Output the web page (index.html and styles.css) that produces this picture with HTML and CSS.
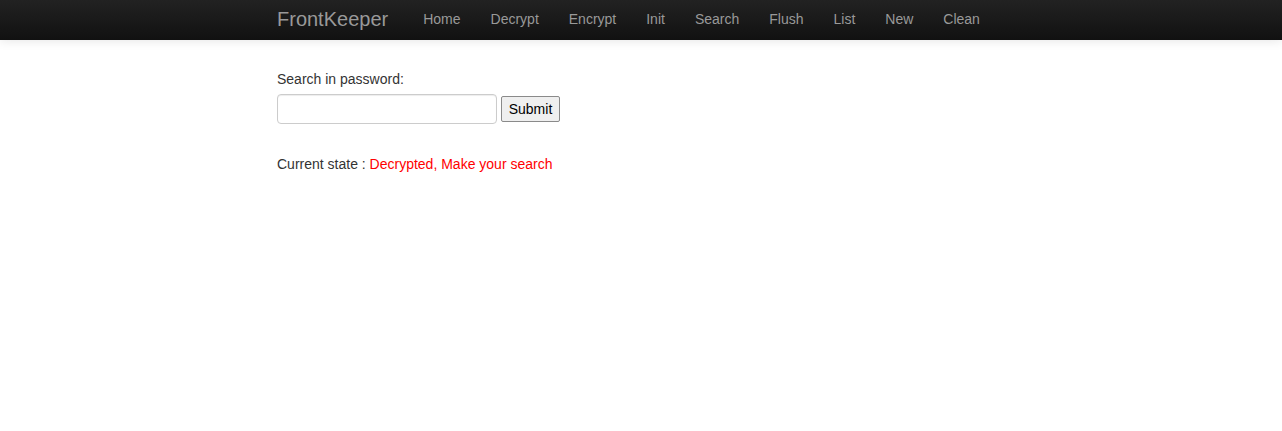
FILE: index.html
```html
<!DOCTYPE html>
<html>
<head>
<meta charset="utf-8">
<title>FrontKeeper</title>
<link rel="stylesheet" href="styles.css">
</head>
<body>
<div class="navbar">
  <div class="container nav-inner">
    <a class="brand" href="#">FrontKeeper</a>
    <ul class="nav">
      <li><a href="#">Home</a></li>
      <li><a href="#">Decrypt</a></li>
      <li><a href="#">Encrypt</a></li>
      <li><a href="#">Init</a></li>
      <li><a href="#">Search</a></li>
      <li><a href="#">Flush</a></li>
      <li><a href="#">List</a></li>
      <li><a href="#">New</a></li>
      <li><a href="#">Clean</a></li>
    </ul>
  </div>
</div>
<div class="container main">
  <form class="search-form">
    <label class="label" for="q">Search in password:</label>
    <div class="row">
      <input id="q" class="input" type="text">
      <button class="btn" type="submit">Submit</button>
    </div>
  </form>
  <p class="state">Current state : <span class="red">Decrypted, Make your search</span></p>
</div>
</body>
</html>
```
FILE: styles.css
```css
html, body {
  margin: 0;
  padding: 0;
  background: #fff;
}
body {
  font-family: "Liberation Sans", Arial, sans-serif;
  font-size: 14px;
  line-height: 20px;
  color: #333;
}
.container {
  width: 728px;
  margin: 0 auto;
}
.navbar {
  height: 40px;
  background: linear-gradient(to bottom, #222222, #111111);
  box-shadow: 0 1px 10px rgba(0,0,0,0.1);
}
.nav-inner {
  display: flex;
  align-items: flex-start;
  height: 40px;
}
.brand {
  font-size: 20px;
  line-height: 20px;
  color: #999;
  text-decoration: none;
  padding: 9px 20px 11px 0;
}
.nav {
  list-style: none;
  margin: 0;
  padding: 0;
  display: flex;
}
.nav a {
  display: block;
  padding: 9px 15px 11px;
  color: #999;
  text-decoration: none;
  font-size: 14px;
  line-height: 20px;
}
.main {
  padding-top: 29px;
}
.search-form {
  margin: 0 0 30px;
}
.label {
  display: block;
  margin-bottom: 5px;
}
.row {
  display: flex;
  align-items: center;
  gap: 4px;
}
.input {
  box-sizing: border-box;
  width: 220px;
  height: 30px;
  padding: 4px 6px;
  border: 1px solid #ccc;
  border-radius: 4px;
  font-size: 14px;
  font-family: inherit;
  box-shadow: inset 0 1px 1px rgba(0,0,0,0.075);
}
.btn {
  box-sizing: border-box;
  width: 59px;
  height: 26px;
  padding: 0;
  font-family: "Liberation Sans", Arial, sans-serif;
  font-size: 14px;
  color: #000;
  background: #efefef;
  border: 1px solid #8a8a8a;
  border-radius: 2px;
}
.state {
  margin: 0;
}
.red {
  color: #f00;
}
```
